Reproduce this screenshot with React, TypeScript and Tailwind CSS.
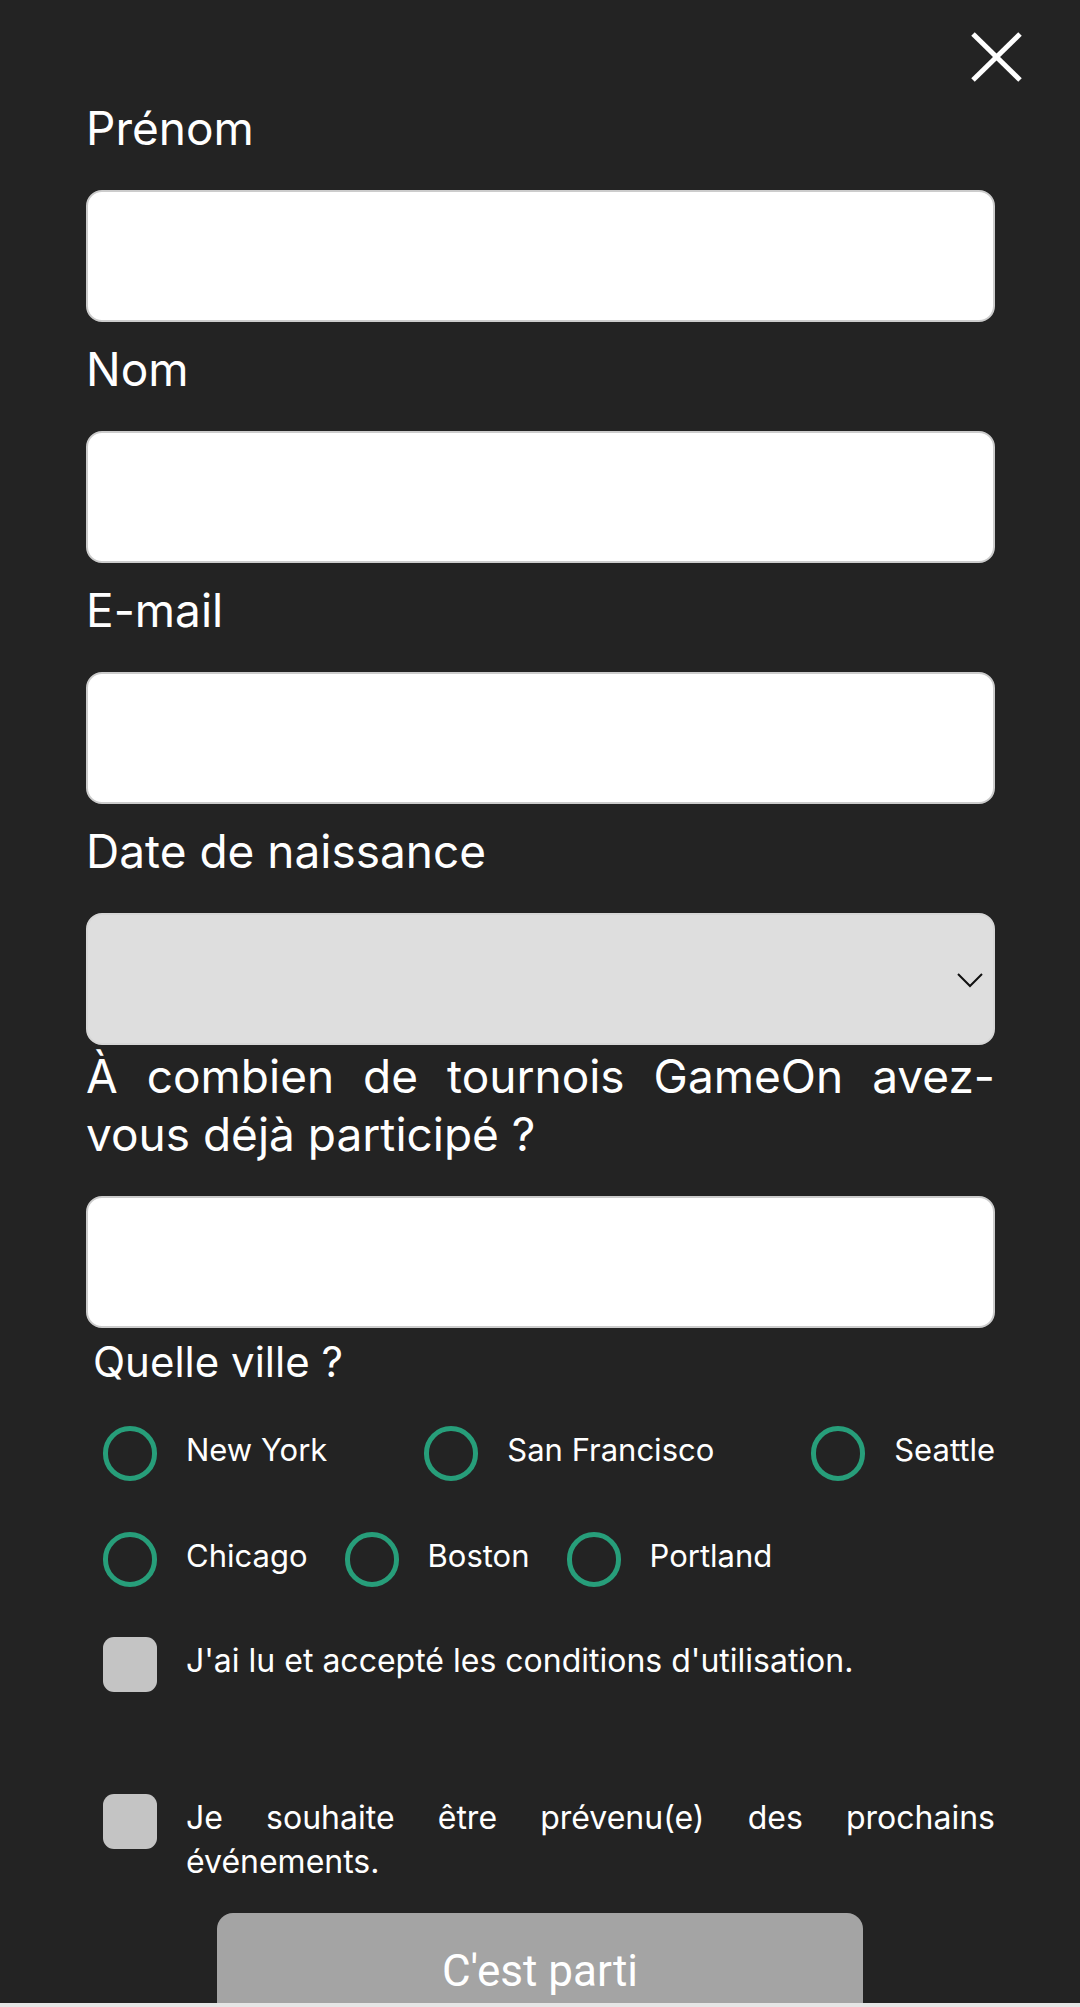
import React from 'react';

const fields = ['Prénom', 'Nom', 'E-mail'];
const cityRow1 = ['New York', 'San Francisco', 'Seattle'];
const cityRow2 = ['Chicago', 'Boston', 'Portland'];

function Radio({ label }: { label: string }) {
  return (
    <label className="flex h-[55px] items-center gap-[29px]">
      <span className="h-[55px] w-[54px] shrink-0 rounded-full border-[5px] border-[#279e7a]" />
      <span className="pb-[8px] text-[31px] leading-[44px]">{label}</span>
    </label>
  );
}

export default function App() {
  return (
    <div className="relative h-[2007px] overflow-hidden bg-[#232323] font-['Inter',sans-serif] text-white">
      <button className="absolute left-[971px] top-[32px]" aria-label="Fermer">
        <svg width="51" height="50" viewBox="0 0 51 50">
          <line x1="2" y1="2" x2="49" y2="48" stroke="white" strokeWidth="5" />
          <line x1="49" y1="2" x2="2" y2="48" stroke="white" strokeWidth="5" />
        </svg>
      </button>

      <form className="pl-[86px] pr-[85px] pt-[99px]">
        {fields.map((f) => (
          <div key={f} className="mb-[18px]">
            <label className="mb-[33px] block text-[46px] leading-[58px]">{f}</label>
            <input className="block h-[132px] w-full rounded-[16px] border-2 border-[#cccccc] bg-white" />
          </div>
        ))}

        <div>
          <label className="mb-[33px] block text-[46px] leading-[58px]">Date de naissance</label>
          <div className="relative h-[132px] w-full rounded-[16px] border-2 border-[#d6d6d6] bg-[#dedede]">
            <svg className="absolute right-[10px] top-[57px]" width="26" height="16" viewBox="0 0 26 16">
              <polyline points="1,2 13,14 25,2" fill="none" stroke="#111" strokeWidth="2" />
            </svg>
          </div>
        </div>

        <div className="mt-[2px] mb-[10px]">
          <label className="mb-[33px] block text-[46px] leading-[58px]">
            <span className="block text-justify [text-align-last:justify]">À combien de tournois GameOn avez-</span>
            <span className="block">vous déjà participé ?</span>
          </label>
          <input className="block h-[132px] w-full rounded-[16px] border-2 border-[#cccccc] bg-white" />
        </div>

        <p className="pl-[7px] text-[42px] leading-[48px]">Quelle ville ?</p>

        <div className="mt-[40px] pl-[17px]">
          <div className="flex justify-between">
            {cityRow1.map((c) => (
              <Radio key={c} label={c} />
            ))}
          </div>
          <div className="mt-[51px] flex gap-[37px]">
            {cityRow2.map((c) => (
              <Radio key={c} label={c} />
            ))}
          </div>

          <label className="mt-[50px] flex items-start gap-[29px]">
            <span className="h-[55px] w-[54px] shrink-0 rounded-[11px] bg-[#c4c4c4]" />
            <span className="pt-[2px] text-[32px] leading-[44px]">J'ai lu et accepté les conditions d'utilisation.</span>
          </label>

          <label className="mt-[102px] flex items-start gap-[29px]">
            <span className="h-[55px] w-[54px] shrink-0 rounded-[11px] bg-[#c4c4c4]" />
            <span className="flex-1 pt-[2px] text-[32px] leading-[44px]">
              <span className="block text-justify [text-align-last:justify]">Je souhaite être prévenu(e) des prochains</span>
              <span className="block">événements.</span>
            </span>
          </label>
        </div>

        <div className="mt-[29px] flex justify-center pr-[1px]">
          <button
            type="button"
            className="flex h-[116px] w-[646px] items-center justify-center rounded-[16px] bg-[#a4a4a4] font-['Roboto',sans-serif] text-[44px] text-white"
          >
            C'est parti
          </button>
        </div>
      </form>

      <div className="absolute bottom-0 left-0 h-[4px] w-full bg-[#e6e6e6]" />
    </div>
  );
}
